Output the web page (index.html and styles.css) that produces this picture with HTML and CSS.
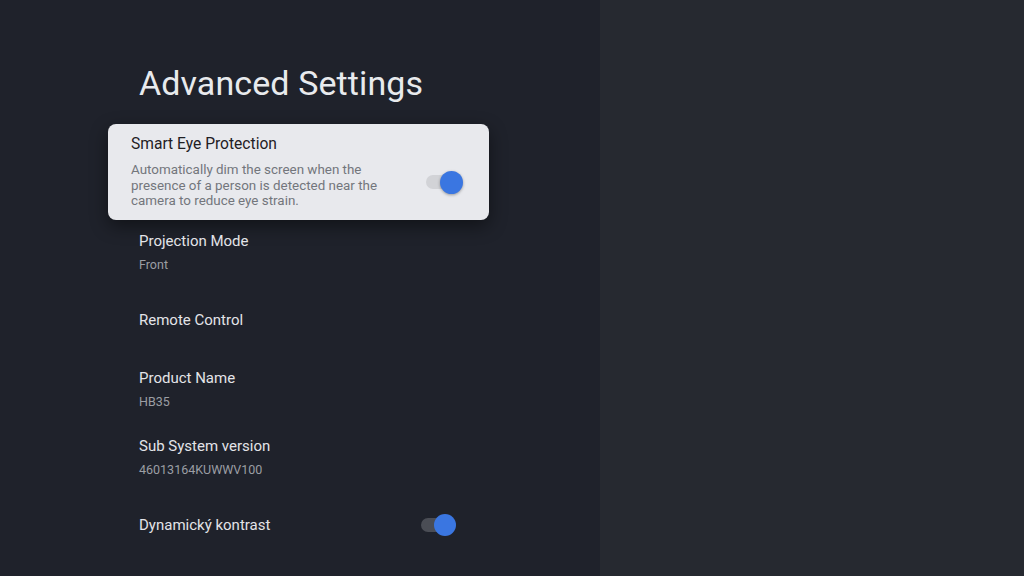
FILE: index.html
```html
<!DOCTYPE html>
<html>
<head>
<meta charset="utf-8">
<link rel="stylesheet" href="styles.css">
</head>
<body>
<div class="screen">
  <div class="panel">
    <h1 class="title">Advanced Settings</h1>
    <div class="card">
      <div class="card-text">
        <div class="card-title">Smart Eye Protection</div>
        <div class="card-desc">Automatically dim the screen when the presence of a person is detected near the camera to reduce eye strain.</div>
      </div>
      <div class="toggle toggle-light"><span class="knob"></span></div>
    </div>
    <div class="list">
      <div class="item">
        <div class="item-text">
          <div class="item-title">Projection Mode</div>
          <div class="item-sub">Front</div>
        </div>
      </div>
      <div class="item">
        <div class="item-text">
          <div class="item-title">Remote Control</div>
        </div>
      </div>
      <div class="item">
        <div class="item-text">
          <div class="item-title">Product Name</div>
          <div class="item-sub">HB35</div>
        </div>
      </div>
      <div class="item">
        <div class="item-text">
          <div class="item-title">Sub System version</div>
          <div class="item-sub">46013164KUWWV100</div>
        </div>
      </div>
      <div class="item">
        <div class="item-text">
          <div class="item-title">Dynamický kontrast</div>
        </div>
        <div class="toggle toggle-dark"><span class="knob"></span></div>
      </div>
    </div>
  </div>
  <div class="side"></div>
</div>
</body>
</html>
```

FILE: styles.css
```css
* { box-sizing: border-box; }
html, body { margin: 0; padding: 0; }
body {
  width: 1024px;
  height: 576px;
  overflow: hidden;
  font-family: Roboto, "Noto Sans", "Liberation Sans", sans-serif;
  background: #262930;
}
.screen {
  display: flex;
  width: 1024px;
  height: 576px;
}
.panel {
  width: 600px;
  background: #1f222b;
  padding: 63px 0 0 139px;
  display: flex;
  flex-direction: column;
}
.side {
  flex: 1;
  background: #262930;
}
.title {
  margin: 0;
  font-weight: 400;
  font-size: 34px;
  line-height: 40px;
  color: #e8eaed;
  letter-spacing: 0.1px;
}
.card {
  margin: 21px 0 -2px -31px;
  width: 381px;
  height: 96px;
  background: #e8e9ed;
  border-radius: 8px;
  padding: 10px 29px 0 23px;
  display: flex;
  align-items: flex-start;
  justify-content: space-between;
  box-shadow: 0 6px 18px rgba(0, 0, 0, 0.45);
}
.card-text { width: 256px; }
.card-title {
  font-size: 15.6px;
  line-height: 20px;
  color: #1f2024;
}
.card-desc {
  margin-top: 8px;
  font-size: 13.4px;
  line-height: 15.5px;
  color: #73767c;
}
.toggle {
  position: relative;
  width: 34px;
  height: 14px;
  border-radius: 7px;
  flex: none;
}
.toggle-light {
  margin-top: 41px;
  background: #d2d3d7;
}
.toggle-dark {
  background: #4a4d55;
  margin-right: 145px;
}
.knob {
  position: absolute;
  right: -3px;
  top: 50%;
  width: 23px;
  height: 23px;
  margin-top: -11.5px;
  border-radius: 50%;
  background: #3a76e1;
}
.toggle-light .knob {
  box-shadow: 0 1px 3px rgba(0, 0, 0, 0.35);
}
.toggle-dark .knob {
  right: -1px;
  width: 22px;
  height: 22px;
  margin-top: -11px;
}
.list {
  display: flex;
  flex-direction: column;
}
.item {
  height: 68.25px;
  display: flex;
  align-items: center;
  justify-content: space-between;
}
.item-title {
  font-size: 15px;
  line-height: 20px;
  color: #e3e4e8;
}
.item-sub {
  margin-top: 6px;
  font-size: 12.5px;
  line-height: 16px;
  color: #9b9ea4;
}
```
